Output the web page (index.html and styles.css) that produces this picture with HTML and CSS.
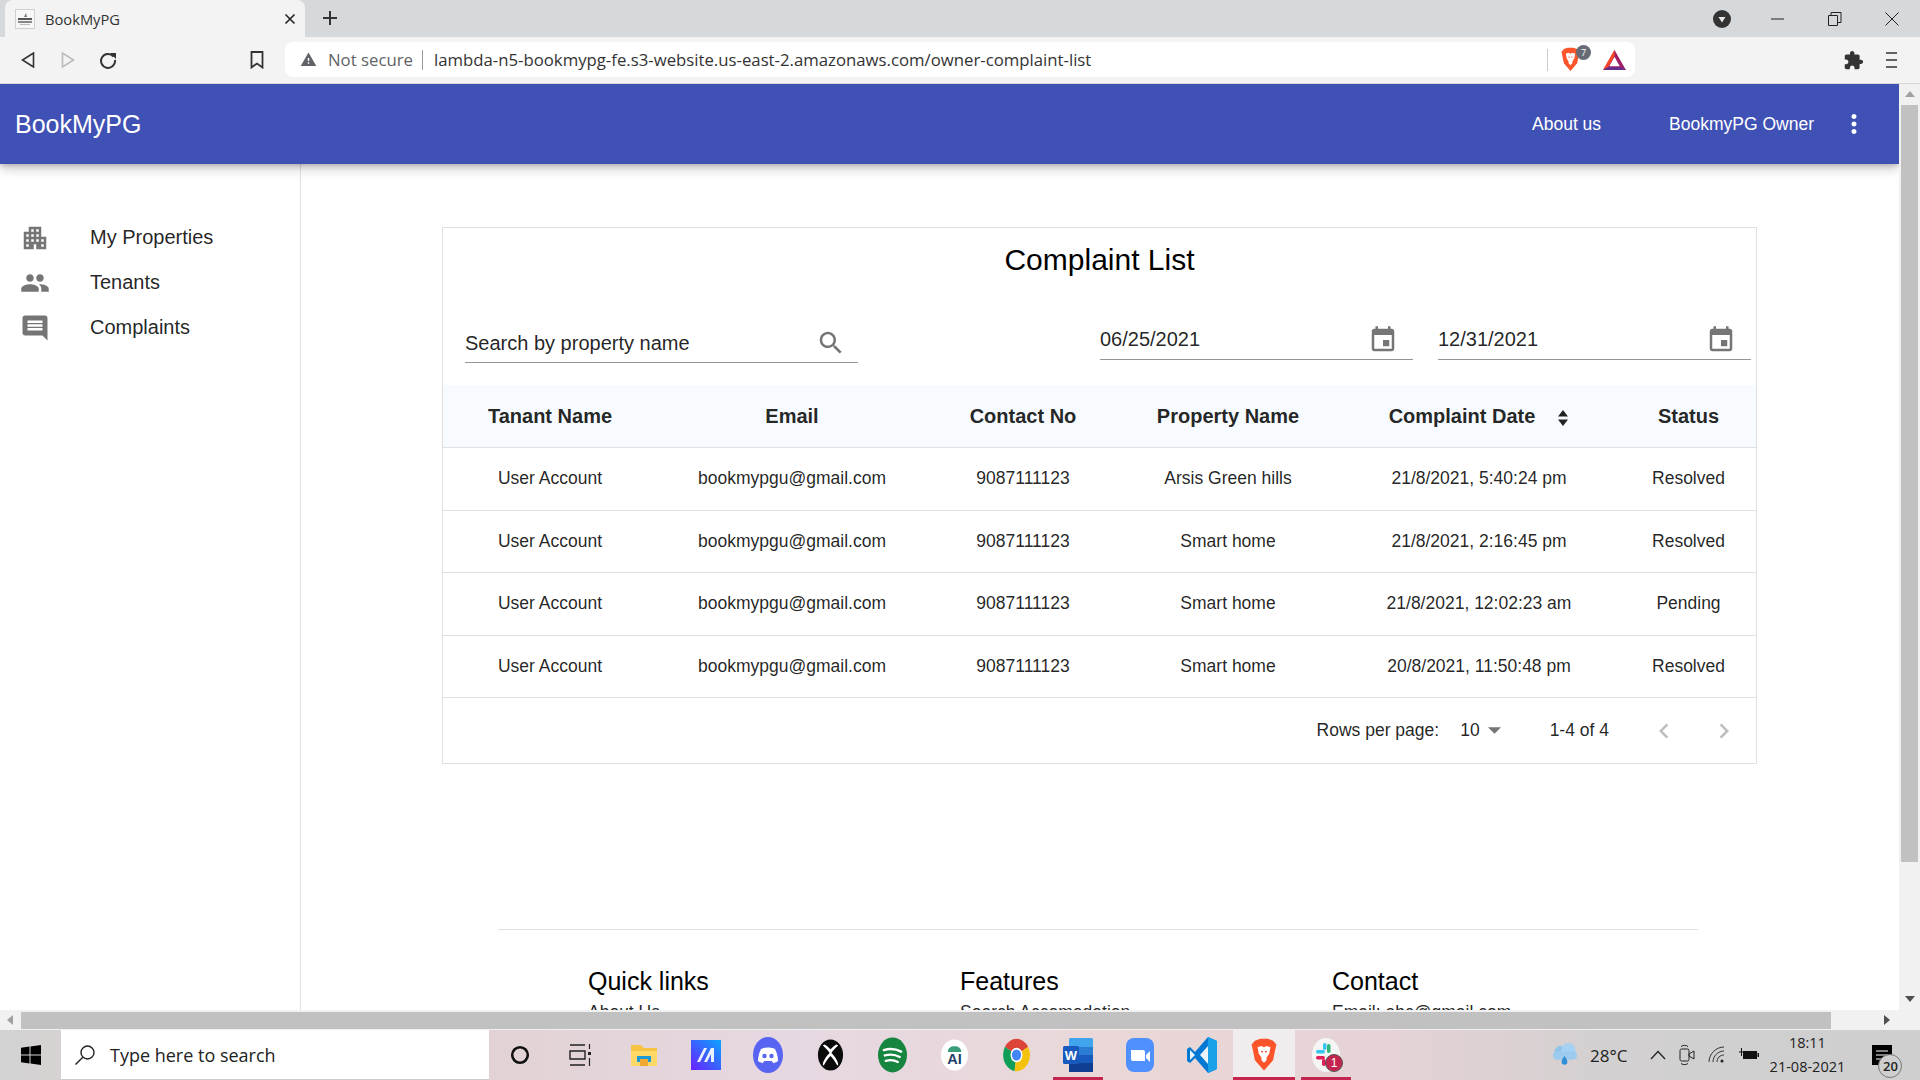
FILE: index.html
```html
<!DOCTYPE HTML>
<html lang="en">
<head>
    <meta http-equiv="content-type" content="text/html; charset=utf-8">
    <title>BookMyPG</title>
    <link rel="stylesheet" href="styles.css">
</head>
<body>
    <!-- Browser chrome -->
    <div class="tabstrip">
        <div class="tab">
            <svg class="tab__favicon" viewBox="0 0 20 20"><rect x="0.5" y="0.5" width="19" height="19" fill="#f7f7f7" stroke="#d0d0d0"/><path d="M9 8l2-4 1 4z" fill="#777"/><rect x="3" y="9" width="14" height="2" fill="#555"/><rect x="3" y="12" width="14" height="2" fill="#888"/><rect x="5" y="15" width="10" height="1" fill="#bbb"/></svg>
            <span class="tab__title">BookMyPG</span>
            <svg class="tab__close" viewBox="0 0 12 12"><path d="M1.5 1.5l9 9M10.5 1.5l-9 9" stroke="#222" stroke-width="1.6"/></svg>
        </div>
        <svg class="tabstrip__plus" viewBox="0 0 16 16"><path d="M8 1v14M1 8h14" stroke="#333" stroke-width="2"/></svg>
        <div class="wincontrols">
            <div class="wincontrols__media"><svg viewBox="0 0 18 18" width="18" height="18"><circle cx="9" cy="9" r="9" fill="#333"/><path d="M5.5 7h7L9 12.5z" fill="#e8e8e8"/></svg></div>
            <div class="wincontrols__btn"><svg viewBox="0 0 14 14" width="14" height="14"><path d="M0 7h13" stroke="#222"/></svg></div>
            <div class="wincontrols__btn"><svg viewBox="0 0 14 14" width="14" height="14"><path d="M.5 3.5h9v10h-9zM3 3.5V.5h10v10h-3.500" fill="none" stroke="#222"/></svg></div>
            <div class="wincontrols__btn"><svg viewBox="0 0 14 14" width="14" height="14"><path d="M.5.5l13 13M13.500.5l-13 13" stroke="#222"/></svg></div>
        </div>
    </div>
    <div class="toolbar">
        <div class="toolbar__btn"><svg viewBox="0 0 14 16" width="14" height="16"><path d="M12.500 1v14L1.500 8z" fill="none" stroke="#333" stroke-width="1.600"/></svg></div>
        <div class="toolbar__btn"><svg viewBox="0 0 14 16" width="14" height="16"><path d="M1.500 1v14l11-7z" fill="none" stroke="#bbb" stroke-width="1.600"/></svg></div>
        <div class="toolbar__btn"><svg viewBox="0 0 18 18" width="18" height="18"><path d="M14.500 5.500A7 7 0 1 0 16 9" fill="none" stroke="#333" stroke-width="2"/><path d="M11 2h6v6z" fill="#333"/></svg></div>
        <div class="toolbar__bookmark"><svg viewBox="0 0 14 18" width="14" height="18"><path d="M1.500 1h11v15.500L7 12.500l-5.500 4z" fill="none" stroke="#333" stroke-width="1.800"/></svg></div>
        <div class="urlbar">
            <svg class="urlbar__warn" viewBox="0 0 24 24"><path d="M1 21h22L12 2 1 21zm12-3h-2v-2h2v2zm0-4h-2v-4h2v4z" fill="#5f6368"/></svg>
            <span class="urlbar__state">Not secure</span>
            <span class="urlbar__sep"></span>
            <span class="urlbar__url">lambda-n5-bookmypg-fe.s3-website.us-east-2.amazonaws.com/owner-complaint-list</span>
            <span class="urlbar__sep urlbar__sep--end"></span>
            <span class="urlbar__shield">
                <svg viewBox="0 0 20 26" width="19" height="25"><path d="M3 2l4-1.500h6L17 2l2.500 3-1 4.500L17 17l-7 8-7-8-1.500-7.500-1-4.500z" fill="#fb542b"/><path d="M5 7l3-1 2 1 2-1 3 1-1 5-2 3v2l-2 2-2-2v-2l-2-3z" fill="#fff"/><path d="M7.500 10h2l-1 1.500zM10.500 10h2l-1 1.500z" fill="#fb542b"/></svg>
                <span class="urlbar__badge">7</span>
            </span>
            <svg class="urlbar__bat" viewBox="0 0 24 21"><path d="M12 0l12 21H0z" fill="#9e1f63"/><path d="M12 0L0 21l5-3L12 6z" fill="#ff4724"/><path d="M0 21h24l-5-3H5z" fill="#662d91"/><path d="M12 7l5.500 10h-11z" fill="#fff"/></svg>
        </div>
        <div class="toolbar__right">
            <svg viewBox="0 0 24 24" width="21" height="21"><path d="M20.500 11H19V7c0-1.100-.9-2-2-2h-4V3.500C13 2.120 11.880 1 10.500 1S8 2.120 8 3.500V5H4c-1.100 0-1.990.9-1.990 2v3.800H3.500c1.490 0 2.700 1.210 2.700 2.700s-1.210 2.700-2.700 2.700H2V20c0 1.100.9 2 2 2h3.800v-1.500c0-1.490 1.210-2.700 2.700-2.700 1.490 0 2.700 1.210 2.700 2.700V22H17c1.100 0 2-.9 2-2v-4h1.500c1.380 0 2.500-1.120 2.500-2.500S21.880 11 20.500 11z" fill="#333"/></svg>
            <svg viewBox="0 0 14 18" width="14" height="18"><path d="M1 2h11M1 9h11M1 16h11" stroke="#333" stroke-width="1.600"/></svg>
        </div>
    </div>

    <!-- Page in the browser viewport -->
    <div class="viewport">
        <div class="page">
            <header class="appbar">
                <span class="appbar__brand">BookMyPG</span>
                <span class="appbar__link">About us</span>
                <span class="appbar__link appbar__link--owner">BookmyPG Owner</span>
                <svg class="icon appbar__more" viewBox="0 0 24 24"><path d="M12 8c1.100 0 2-.9 2-2s-.9-2-2-2-2 .9-2 2 .9 2 2 2zm0 2c-1.100 0-2 .9-2 2s.9 2 2 2 2-.9 2-2-.9-2-2-2zm0 6c-1.100 0-2 .9-2 2s.9 2 2 2 2-.9 2-2-.9-2-2-2z" fill="#fff"/></svg>
            </header>
            <div class="layout">
                <nav class="sidebar">
                    <div class="sidebar__item">
                        <svg class="icon" viewBox="0 0 24 24"><path d="M17 11V3H7v4H3v14h8v-4h2v4h8V11h-4zM7 19H5v-2h2v2zm0-4H5v-2h2v2zm0-4H5V9h2v2zm4 4H9v-2h2v2zm0-4H9V9h2v2zm0-4H9V5h2v2zm4 8h-2v-2h2v2zm0-4h-2V9h2v2zm0-4h-2V5h2v2zm4 12h-2v-2h2v2zm0-4h-2v-2h2v2z"/></svg>
                        <span>My Properties</span>
                    </div>
                    <div class="sidebar__item">
                        <svg class="icon" viewBox="0 0 24 24"><path d="M16 11c1.660 0 2.990-1.340 2.990-3S17.660 5 16 5c-1.660 0-3 1.340-3 3s1.340 3 3 3zm-8 0c1.660 0 2.990-1.340 2.990-3S9.660 5 8 5C6.340 5 5 6.340 5 8s1.340 3 3 3zm0 2c-2.330 0-7 1.170-7 3.500V19h14v-2.500c0-2.330-4.670-3.500-7-3.500zm8 0c-.29 0-.62.02-.97.05 1.160.84 1.970 1.970 1.970 3.450V19h6v-2.500c0-2.330-4.670-3.500-7-3.500z"/></svg>
                        <span>Tenants</span>
                    </div>
                    <div class="sidebar__item">
                        <svg class="icon" viewBox="0 0 24 24"><path d="M21.990 4c0-1.100-.89-2-1.990-2H4c-1.100 0-2 .9-2 2v12c0 1.100.9 2 2 2h14l4 4-.01-18zM18 14H6v-2h12v2zm0-3H6V9h12v2zm0-3H6V6h12v2z"/></svg>
                        <span>Complaints</span>
                    </div>
                </nav>
                <main class="content">
                    <section class="card">
                        <h1 class="card__title">Complaint List</h1>
                        <div class="filters">
                            <div class="field field--search">
                                <span class="field__text">Search by property name</span>
                                <svg class="icon" viewBox="0 0 24 24"><path d="M15.500 14h-.79l-.28-.27C15.410 12.590 16 11.110 16 9.500 16 5.910 13.090 3 9.500 3S3 5.910 3 9.500 5.910 16 9.500 16c1.610 0 3.090-.59 4.230-1.570l.27.28v.79l5 4.990L20.490 19l-4.990-5zm-6 0C7.010 14 5 11.990 5 9.500S7.010 5 9.500 5 14 7.010 14 9.500 11.990 14 9.500 14z"/></svg>
                            </div>
                            <div class="field field--date">
                                <span class="field__text">06/25/2021</span>
                                <svg class="icon" viewBox="0 0 24 24"><path d="M17 12h-5v5h5v-5zM16 1v2H8V1H6v2H5c-1.110 0-1.990.9-1.990 2L3 19c0 1.100.89 2 2 2h14c1.100 0 2-.9 2-2V5c0-1.100-.9-2-2-2h-1V1h-2zm3 18H5V8h14v11z"/></svg>
                            </div>
                            <div class="field field--date">
                                <span class="field__text">12/31/2021</span>
                                <svg class="icon" viewBox="0 0 24 24"><path d="M17 12h-5v5h5v-5zM16 1v2H8V1H6v2H5c-1.110 0-1.990.9-1.990 2L3 19c0 1.100.89 2 2 2h14c1.100 0 2-.9 2-2V5c0-1.100-.9-2-2-2h-1V1h-2zm3 18H5V8h14v11z"/></svg>
                            </div>
                        </div>
                        <table class="complaints">
                            <colgroup>
                                <col class="col-name"><col class="col-email"><col class="col-contact">
                                <col class="col-property"><col class="col-date"><col class="col-status">
                            </colgroup>
                            <thead>
                                <tr>
                                    <th>Tanant Name</th>
                                    <th>Email</th>
                                    <th>Contact No</th>
                                    <th>Property Name</th>
                                    <th>Complaint Date<svg class="sort" viewBox="0 0 12 18"><path d="M6 1l5 6.500H1zM6 17l-5-6.500h10z"/></svg></th>
                                    <th>Status</th>
                                </tr>
                            </thead>
                            <tbody>
                                <tr><td>User Account</td><td>bookmypgu@gmail.com</td><td>9087111123</td><td>Arsis Green hills</td><td>21/8/2021, 5:40:24 pm</td><td>Resolved</td></tr>
                                <tr><td>User Account</td><td>bookmypgu@gmail.com</td><td>9087111123</td><td>Smart home</td><td>21/8/2021, 2:16:45 pm</td><td>Resolved</td></tr>
                                <tr><td>User Account</td><td>bookmypgu@gmail.com</td><td>9087111123</td><td>Smart home</td><td>21/8/2021, 12:02:23 am</td><td>Pending</td></tr>
                                <tr><td>User Account</td><td>bookmypgu@gmail.com</td><td>9087111123</td><td>Smart home</td><td>20/8/2021, 11:50:48 pm</td><td>Resolved</td></tr>
                            </tbody>
                        </table>
                        <div class="pager">
                            <span>Rows per page:</span>
                            <span class="pager__select">10<svg viewBox="0 0 14 7"><path d="M0 0h14L7 7z"/></svg></span>
                            <span>1-4 of 4</span>
                            <span class="pager__nav">
                                <svg class="icon" viewBox="0 0 24 24"><path d="M15.410 7.410L14 6l-6 6 6 6 1.410-1.410L10.830 12z"/></svg>
                                <svg class="icon" viewBox="0 0 24 24"><path d="M10 6L8.590 7.410 13.170 12l-4.580 4.590L10 18l6-6z"/></svg>
                            </span>
                        </div>
                    </section>
                    <footer class="sitefoot">
                        <div class="sitefoot__cols">
                            <div class="sitefoot__col"><h3>Quick links</h3><p>About Us</p></div>
                            <div class="sitefoot__col"><h3>Features</h3><p>Search Accomodation</p></div>
                            <div class="sitefoot__col"><h3>Contact</h3><p>Email: abc@gmail.com</p></div>
                        </div>
                    </footer>
                </main>
            </div>
        </div>
        <div class="vscroll">
            <i class="arrow arrow--up"></i>
            <div class="vscroll__thumb"></div>
            <i class="arrow arrow--down"></i>
        </div>
        <div class="hscroll">
            <i class="arrow arrow--left"></i>
            <div class="hscroll__thumb"></div>
            <i class="arrow arrow--right"></i>
        </div>
        <div class="scrollcorner"></div>
    </div>

    <!-- Windows taskbar -->
    <div class="taskbar">
        <div class="taskbar__start"><svg viewBox="0 0 20 20" width="20" height="20"><path d="M0 2.800l8.500-1.200v8H0zM9.500 1.400L20 0v9.600H9.500zM0 10.500h8.500v8L0 17.300zM9.500 10.500H20V20L9.500 18.600z" fill="#000"/></svg></div>
        <div class="taskbar__search">
            <svg viewBox="0 0 22 22" width="22" height="22"><circle cx="13.500" cy="8.500" r="6.500" fill="none" stroke="#222" stroke-width="1.400"/><path d="M8.800 13.200L1.500 20.500" stroke="#222" stroke-width="1.400"/></svg>
            <span>Type here to search</span>
        </div>
        <div class="taskbar__tile"><svg viewBox="0 0 20 20" width="20" height="20"><circle cx="10" cy="10" r="7.800" fill="none" stroke="#111" stroke-width="2.600"/></svg></div>
        <div class="taskbar__tile"><svg class="taskbar__taskview" viewBox="0 0 24 24" width="24" height="24"><path d="M2 2h15M2 22h15M2 8h15v8H2z" fill="none" stroke="#222" stroke-width="1.400"/><rect x="20" y="9" width="3" height="3" fill="#222"/><path d="M21.500 1v5M21.500 15v8" stroke="#222" stroke-width="1.200"/></svg></div>
        <div class="taskbar__tile"><svg viewBox="0 0 28 26" width="28" height="26"><path d="M1 3h10l3 3h13v18H1z" fill="#f6c443"/><path d="M1 9h26v15H1z" fill="#ffd868"/><path d="M7 14h14v6H7z" fill="#1d9ad6"/><path d="M10 17h8v7h-8z" fill="#f0a830"/></svg></div>
        <div class="taskbar__tile"><svg viewBox="0 0 30 30" width="30" height="30"><defs><linearGradient id="mgrad" x1="0" y1="1" x2="1" y2="0"><stop offset="0" stop-color="#6a1fff"/><stop offset="1" stop-color="#0aa5ff"/></linearGradient></defs><rect width="30" height="30" fill="url(#mgrad)"/><path d="M6 22l7-14h3L9 22zM13 22l7-14h3v14h-3v-8l-4 8z" fill="#fff" opacity=".9"/></svg></div>
        <div class="taskbar__tile"><svg viewBox="0 0 30 36" width="30" height="36"><ellipse cx="15" cy="18" rx="15" ry="18" fill="#5865f2"/><path d="M8 12c4-2 10-2 14 0 2 4 3 8 3 12-2 1.500-4 2-5 2l-1-2h-8l-1 2c-1 0-3-.5-5-2 0-4 1-8 3-12z" fill="#fff"/><circle cx="11.500" cy="19" r="2.200" fill="#5865f2"/><circle cx="18.500" cy="19" r="2.200" fill="#5865f2"/></svg></div>
        <div class="taskbar__tile"><svg viewBox="0 0 28 32" width="27" height="32"><ellipse cx="14" cy="16" rx="13" ry="16" fill="#0b0b0b"/><path d="M8 5c2 1 4 3 6 5 2-2 4-4 6-5l2 1c-3 3-6 6-7 8 4 4 7 9 7 12l-1 1c-2-4-5-8-7-10-2 2-5 6-7 10l-1-1c0-3 3-8 7-12-1-2-4-5-7-8z" fill="#fff"/></svg></div>
        <div class="taskbar__tile"><svg viewBox="0 0 30 36" width="29" height="36"><ellipse cx="15" cy="18" rx="15" ry="18" fill="#16853f"/><path d="M6 13c6-2 12-1.500 18 1.500M7 18.500c5-1.500 11-1 15.500 1.500M8 24c4-1 9-.7 12.500 1.200" fill="none" stroke="#fff" stroke-width="2.400" stroke-linecap="round"/></svg></div>
        <div class="taskbar__tile"><svg viewBox="0 0 28 32" width="27" height="32"><ellipse cx="14" cy="16" rx="14" ry="16" fill="#fff"/><path d="M7 13c0-4 3-6 7-6s7 2 7 6z" fill="#3a9d7a"/><text x="14" y="25" font-family="Liberation Sans, sans-serif" font-size="15" font-weight="700" text-anchor="middle" fill="#1e3f66">AI</text></svg></div>
        <div class="taskbar__tile"><svg viewBox="0 0 28 34" width="27" height="34"><g transform="scale(1 1.214)"><path d="M14 14L2 7A14 14 0 0 1 26 7z" fill="#db4437"/><path d="M2 7a14 14 0 0 0 10 20.800L14 14z" fill="#0f9d58"/><path d="M26 7L14 14l-2 13.800A14 14 0 0 0 26 7z" fill="#f4c20d"/><circle cx="14" cy="14" r="6.200" fill="#fff"/><circle cx="14" cy="14" r="4.800" fill="#4285f4"/></g></svg></div>
        <div class="taskbar__tile taskbar__tile--open"><svg viewBox="0 0 30 34" width="30" height="34"><rect x="6" width="24" height="34" rx="1.500" fill="#41a5ee"/><rect x="6" y="9" width="24" height="8" fill="#2b7cd3"/><rect x="6" y="17" width="24" height="8" fill="#185abd"/><rect x="6" y="25" width="24" height="9" fill="#103f91"/><rect y="8" width="16" height="18" rx="1.500" fill="#185abd"/><text x="8" y="22" font-family="Liberation Sans, sans-serif" font-size="13" font-weight="700" text-anchor="middle" fill="#fff">W</text></svg></div>
        <div class="taskbar__tile"><svg viewBox="0 0 28 34" width="28" height="34"><rect width="28" height="34" rx="8" fill="#4f90fe"/><path d="M5 12h12a2 2 0 0 1 2 2v9H7a2 2 0 0 1-2-2zM20 17l4-4v11l-4-4z" fill="#fff"/></svg></div>
        <div class="taskbar__tile"><svg viewBox="0 0 30 36" width="30" height="36"><path d="M21 0l9 4v28l-9 4L8 21l-5 5-3-2v-12l3-2 5 5z" fill="#0078d4"/><path d="M21 0l9 4v28l-9 4z" fill="#1ba1e8"/><path d="M21 9l-8 9 8 9z" fill="#eaf3fa"/><path d="M3 13l5 5-5 5z" fill="#eaf3fa"/></svg></div>
        <div class="taskbar__tile taskbar__tile--active"><svg viewBox="0 0 20 26" width="26" height="36"><path d="M3 2l4-1.500h6L17 2l2.500 3-1 4.500L17 17l-7 8-7-8-1.500-7.500-1-4.500z" fill="#fb542b"/><path d="M5 7l3-1 2 1 2-1 3 1-1 5-2 3v2l-2 2-2-2v-2l-2-3z" fill="#fff"/><path d="M7.500 10h2l-1 1.500zM10.500 10h2l-1 1.500z" fill="#fb542b"/></svg></div>
        <div class="taskbar__tile taskbar__tile--open">
            <svg viewBox="0 0 28 34" width="28" height="34"><ellipse cx="14" cy="17" rx="14" ry="17" fill="#f5f5f5"/><rect x="4" y="12" width="9" height="3.500" rx="1.700" fill="#36c5f0"/><rect x="11" y="5" width="3.500" height="7" rx="1.700" fill="#36c5f0"/><rect x="15" y="6" width="3.500" height="9" rx="1.700" fill="#2eb67d"/><rect x="4" y="18" width="9" height="3.500" rx="1.700" fill="#e01e5a"/><rect x="10" y="21" width="3.500" height="7" rx="1.700" fill="#e01e5a"/></svg>
            <span class="taskbar__count">1</span>
        </div>
        <div class="tray">
            <svg viewBox="0 0 28 26" width="27" height="26"><circle cx="10" cy="10" r="6.500" fill="#8fc3ec"/><circle cx="18" cy="8" r="7.500" fill="#a6d1f2"/><rect x="2" y="9" width="25" height="9" rx="4.500" fill="#9ccbef"/><path d="M14 14c2 3 3 4 3 6a3 3 0 0 1-6 0c0-2 1-3 3-6z" fill="#2f8ed8"/></svg>
            <span class="tray__temp">28°C</span>
            <svg class="tray__chevron" viewBox="0 0 16 10" width="16" height="10"><path d="M1 9l7-7.500L15 9" fill="none" stroke="#222" stroke-width="1.300"/></svg>
            <svg viewBox="0 0 16 22" width="16" height="22"><rect x="1" y="5" width="9" height="12" rx="1.500" fill="none" stroke="#222"/><path d="M10 10l5-3v8l-5-3zM2 2.500c2-1.500 5-1.500 7 0M2 19.500c2 1.500 5 1.500 7 0" fill="none" stroke="#222"/></svg>
            <svg viewBox="0 0 18 18" width="18" height="18"><path d="M1 16C1 8 8 1 16 1M5 16c0-6 5-11 11-11M9 16c0-4 3-7 7-7" fill="none" stroke="#333"/><circle cx="14" cy="15" r="1.500" fill="#222"/></svg>
            <svg viewBox="0 0 20 14" width="20" height="14"><path d="M0 4h5M2.500 0v8" stroke="#111"/><rect x="4.500" y="3.500" width="13" height="7" fill="#111" stroke="#111"/><rect x="18.500" y="5" width="1.500" height="4" fill="#111"/></svg>
            <div class="tray__clock"><span>18:11</span><span>21-08-2021</span></div>
            <div class="tray__notify">
                <svg viewBox="0 0 20 20" width="20" height="20"><rect width="20" height="20" fill="#000"/><path d="M4 6h12M4 10h12M4 14h12" stroke="#fff"/></svg>
                <span class="tray__count">20</span>
            </div>
        </div>
    </div>
</body>
</html>
```

FILE: styles.css
```css
:root {
    --chrome-grey: rgb(214, 217, 220);
    --chrome-light: rgb(243, 243, 243);
    --indigo: rgb(63, 81, 181);
    --faded-border: rgb(224, 224, 224);
    --icon-grey: rgb(117, 117, 117);
    --text: rgba(0, 0, 0, 0.87);
    --head-bg: rgb(247, 250, 255);
    --scroll-track: rgb(241, 241, 241);
    --scroll-thumb: rgb(193, 193, 193);
    --underline: rgb(150, 150, 150);
}

html, body {
    margin: 0;
    padding: 0;
}

body {
    width: 1920px;
    height: 1080px;
    overflow: hidden;
    display: flex;
    flex-direction: column;
    font-family: "Liberation Sans", Arial, sans-serif;
    color: var(--text);
    background-color: white;
}

.icon {
    width: 30px;
    height: 30px;
    flex: none;
    fill: var(--icon-grey);
}

/* Browser tabs */
.tabstrip {
    height: 37px;
    flex: none;
    display: flex;
    align-items: flex-end;
    background-color: var(--chrome-grey);
    font-family: "Open Sans", sans-serif;
}

.tab {
    width: 300px;
    height: 37px;
    margin-left: 5px;
    padding: 0 9px 0 10px;
    box-sizing: border-box;
    display: flex;
    align-items: center;
    border-radius: 8px 8px 0 0;
    background-color: var(--chrome-light);
}

.tab__favicon {
    width: 20px;
    height: 20px;
    margin-right: 10px;
}

.tab__title {
    flex: 1;
    font-size: 14.7px;
    color: #333;
}

.tab__close {
    width: 12px;
    height: 12px;
}

.tabstrip__plus {
    width: 16px;
    height: 16px;
    margin: 0 0 11px 17px;
}

.wincontrols {
    margin-left: auto;
    height: 37px;
    display: flex;
    align-items: center;
}

.wincontrols__media {
    width: 54px;
    display: flex;
    justify-content: center;
}

.wincontrols__btn {
    width: 57px;
    display: flex;
    justify-content: center;
}

/* Browser toolbar */
.toolbar {
    height: 47px;
    flex: none;
    display: flex;
    align-items: center;
    padding-left: 8px;
    box-sizing: border-box;
    border-bottom: 1px solid rgb(215, 215, 215);
    background-color: var(--chrome-light);
    font-family: "Open Sans", sans-serif;
}

.toolbar__btn {
    width: 40px;
    display: flex;
    justify-content: center;
}

.toolbar__bookmark {
    width: 157px;
    padding-left: 122px;
    box-sizing: border-box;
    flex: none;
    display: flex;
}

.urlbar {
    width: 1350px;
    height: 35px;
    margin-top: -1px;
    padding-left: 15px;
    box-sizing: border-box;
    display: flex;
    align-items: center;
    flex: none;
    border-radius: 8px;
    background-color: white;
    font-size: 16.75px;
}

.urlbar__warn {
    width: 17px;
    height: 17px;
    margin-right: 11px;
}

.urlbar__state {
    color: #5f6368;
}

.urlbar__sep {
    width: 1px;
    height: 20px;
    margin: 0 11px 0 9px;
    background-color: #999;
}

.urlbar__url {
    width: 1113px;
    color: #333;
    white-space: nowrap;
}

.urlbar__sep--end {
    height: 22px;
    margin: 0 13px 0 0;
    background-color: #ccc;
}

.urlbar__shield {
    position: relative;
    display: flex;
    width: 42px;
}

.urlbar__badge {
    position: absolute;
    top: -2px;
    left: 15px;
    width: 15px;
    height: 15px;
    border-radius: 50%;
    background-color: #666b75;
    color: white;
    font-size: 9px;
    line-height: 15px;
    text-align: center;
}

.urlbar__bat {
    width: 23px;
    height: 20px;
}

.toolbar__right {
    flex: 1;
    display: flex;
    align-items: center;
    justify-content: flex-end;
    gap: 21px;
    padding-right: 21px;
}

/* Browser viewport with its scrollbars */
.viewport {
    flex: 1;
    min-height: 0;
    display: grid;
    grid-template-columns: 1fr 21px;
    grid-template-rows: 1fr 20px;
}

.page {
    min-width: 0;
    min-height: 0;
    overflow: hidden;
    display: flex;
    flex-direction: column;
}

.vscroll {
    display: flex;
    flex-direction: column;
    align-items: center;
    background-color: var(--scroll-track);
}

.vscroll__thumb {
    width: 17px;
    height: 757px;
    margin-bottom: auto;
    background-color: var(--scroll-thumb);
}

.hscroll {
    display: flex;
    align-items: center;
    background-color: var(--scroll-track);
}

.hscroll__thumb {
    width: 1810px;
    height: 17px;
    margin-right: auto;
    background-color: var(--scroll-thumb);
}

.scrollcorner {
    background-color: var(--scroll-track);
}

.arrow {
    display: block;
    flex: none;
    width: 0;
    height: 0;
    border: 5px solid transparent;
}

.arrow--up {
    margin: 7px 0 8px;
    border-top-width: 0;
    border-bottom: 6px solid #a0a0a0;
}

.arrow--down {
    margin-bottom: 8px;
    border-bottom-width: 0;
    border-top: 6px solid #505050;
}

.arrow--left {
    margin: 0 8px 0 7px;
    border-left-width: 0;
    border-right: 6px solid #a0a0a0;
}

.arrow--right {
    margin-right: 9px;
    border-right-width: 0;
    border-left: 6px solid #505050;
}

/* App bar */
.appbar {
    position: relative;
    z-index: 2;
    height: 80px;
    flex: none;
    display: flex;
    align-items: center;
    padding: 0 30px 0 15px;
    background-color: var(--indigo);
    color: white;
    box-shadow: 0 2px 5px -1px rgba(0, 0, 0, 0.2), 0 5px 12px 0 rgba(0, 0, 0, 0.14), 0 1px 12px 0 rgba(0, 0, 0, 0.12);
}

.appbar__brand {
    font-size: 25px;
    margin-right: auto;
}

.appbar__link {
    font-size: 17.5px;
    font-weight: 400;
}

.appbar__link--owner {
    margin-left: 68px;
    margin-right: 25px;
}

.layout {
    flex: 1;
    display: flex;
    min-height: 0;
}

/* Sidebar */
.sidebar {
    width: 301px;
    flex: none;
    padding-top: 51px;
    box-sizing: border-box;
    border-right: 1px solid var(--faded-border);
}

.sidebar__item {
    height: 45px;
    padding-left: 20px;
    display: flex;
    align-items: center;
    gap: 40px;
    font-size: 20px;
}

/* Complaint card */
.content {
    flex: 1;
    min-width: 0;
}

.card {
    width: 1315px;
    margin: 63px 0 0 141px;
    box-sizing: border-box;
    border: 1px solid var(--faded-border);
}

.card__title {
    margin: 0;
    padding-top: 14px;
    font-size: 30px;
    font-weight: 400;
    line-height: 36px;
    text-align: center;
    color: black;
}

.filters {
    height: 107px;
    box-sizing: border-box;
    padding: 0 5px 0 22px;
    display: flex;
    align-items: flex-start;
    gap: 25px;
    font-size: 20px;
}

.field {
    height: 40px;
    box-sizing: border-box;
    display: flex;
    align-items: center;
    border-bottom: 1px solid var(--underline);
}

.field__text {
    flex: 1;
}

.field--search {
    width: 393px;
    margin: 45px auto 0 0;
    padding-right: 12px;
}

.field--search .field__text {
    padding-top: 2px;
}

.field--date {
    width: 313px;
    margin-top: 42px;
    padding-right: 15px;
}

.complaints {
    width: 100%;
    table-layout: fixed;
    border-collapse: collapse;
    font-size: 17.5px;
    text-align: center;
}

.col-name { width: 214px; }
.col-email { width: 270px; }
.col-contact { width: 192px; }
.col-property { width: 218px; }
.col-date { width: 284px; }
.col-status { width: 135px; }

.complaints th {
    height: 62px;
    padding: 0;
    font-size: 20px;
    font-weight: 700;
    background-color: var(--head-bg);
    border-bottom: 1px solid var(--faded-border);
}

.complaints td {
    height: 61.5px;
    padding: 0;
    border-bottom: 1px solid var(--faded-border);
}

.sort {
    width: 12px;
    height: 18px;
    margin-left: 22px;
    vertical-align: -4px;
    fill: #222;
}

.pager {
    height: 65px;
    box-sizing: border-box;
    padding-right: 2px;
    display: flex;
    align-items: center;
    justify-content: flex-end;
    font-size: 17.5px;
}

.pager__select {
    margin: 0 49px 0 21px;
    display: flex;
    align-items: center;
    gap: 8px;
}

.pager__select svg {
    width: 13px;
    height: 7px;
    fill: var(--icon-grey);
}

.pager__nav {
    margin-left: 25px;
    display: flex;
}

.pager__nav .icon {
    padding: 0 15px;
    fill: rgb(190, 190, 190);
}

/* Site footer, cut off by the viewport */
.sitefoot {
    width: 1200px;
    margin: 165px 0 0 197px;
    border-top: 1px solid var(--faded-border);
}

.sitefoot__cols {
    padding: 36px 0 0 90px;
    display: flex;
}

.sitefoot__col {
    width: 372px;
    flex: none;
}

.sitefoot__col h3 {
    margin: 0 0 6px;
    font-size: 25px;
    font-weight: 400;
    line-height: 30px;
    color: black;
}

.sitefoot__col p {
    margin: 0;
    font-size: 17.5px;
}

/* Windows taskbar */
.taskbar {
    height: 50px;
    flex: none;
    display: flex;
    align-items: stretch;
    background: linear-gradient(90deg, #d2d2d2 0, #d6d2d2 60px, #e2d2d4 490px, #e6d8e2 800px, #ead8d8 1100px, #e4d2d6 1400px, #d2d0d0 1620px, #cfcfcf 1920px);
}

.taskbar__start {
    width: 61px;
    flex: none;
    display: flex;
    align-items: center;
    justify-content: center;
}

.taskbar__search {
    width: 428px;
    flex: none;
    padding-left: 13px;
    box-sizing: border-box;
    display: flex;
    align-items: center;
    gap: 14px;
    background-color: white;
    border-bottom: 1px solid #ccc;
    font-family: "Open Sans", sans-serif;
    font-size: 18px;
    color: #222;
}

.taskbar__tile {
    position: relative;
    width: 62px;
    flex: none;
    box-sizing: border-box;
    display: flex;
    align-items: center;
    justify-content: center;
}

.taskbar__taskview {
    margin-right: 4px;
}

.taskbar__tile--open::after,
.taskbar__tile--active::after {
    content: "";
    position: absolute;
    left: 6px;
    right: 6px;
    bottom: 0;
    height: 3px;
    background-color: #c4254e;
}

.taskbar__tile--active {
    background-color: rgb(241, 236, 237);
}

.taskbar__tile--active::after {
    left: 0;
    right: 0;
}

.taskbar__count {
    position: absolute;
    top: 24px;
    left: 30px;
    width: 16px;
    height: 16px;
    border: 1px solid #555;
    border-radius: 50%;
    background-color: #c4254e;
    color: white;
    font-size: 12px;
    line-height: 16px;
    text-align: center;
}

.tray {
    flex: 1;
    display: flex;
    align-items: center;
    padding-left: 194px;
    font-family: "Open Sans", sans-serif;
    color: #222;
}

.tray__temp {
    margin: 0 23px 0 12px;
    font-size: 17px;
}

.tray__chevron {
    margin-right: 13px;
}

.tray svg + svg {
    margin-left: 13px;
}

.tray .tray__chevron + svg {
    margin-left: 0;
}

.tray__clock {
    width: 80px;
    margin-left: 8px;
    display: flex;
    flex-direction: column;
    align-items: center;
    gap: 4px;
    font-size: 14.5px;
    line-height: 20px;
    white-space: nowrap;
}

.tray__notify {
    position: relative;
    margin-left: 25px;
    display: flex;
}

.tray__count {
    position: absolute;
    top: 9px;
    left: 6px;
    width: 22px;
    height: 22px;
    border: 1px solid #777;
    border-radius: 50%;
    background-color: #cfcfcf;
    font-size: 13px;
    font-weight: 600;
    line-height: 22px;
    text-align: center;
}
```
